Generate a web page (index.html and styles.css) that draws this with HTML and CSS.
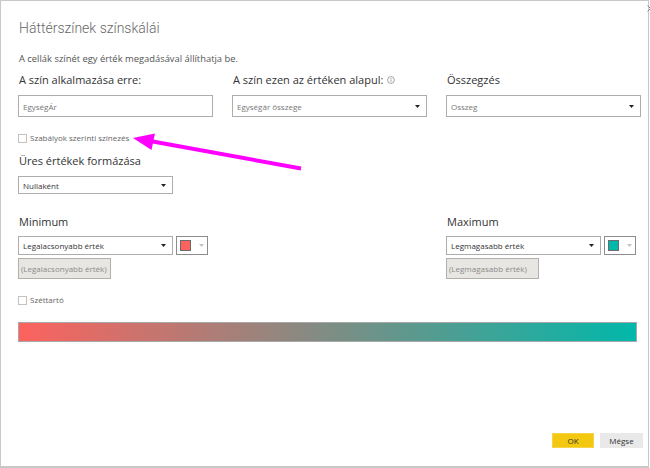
FILE: index.html
```html
<!DOCTYPE html>
<html lang="hu">
<head>
<meta charset="utf-8">
<title>Háttérszínek színskálái</title>
<link rel="stylesheet" href="styles.css">
</head>
<body>
<div class="dialog">
  <span class="close" aria-label="Bezárás"><svg width="7" height="7" viewBox="0 0 7 7"><path d="M0.5 0.5L6.5 6.5M6.5 0.5L0.5 6.5" stroke="#8a8a8a" stroke-width="1"/></svg></span>
  <h1 class="title">Háttérszínek színskálái</h1>
  <p class="subtitle">A cellák színét egy érték megadásával állíthatja be.</p>
  <div class="grid3">
    <div class="field">
      <div class="label">A szín alkalmazása erre:</div>
      <div class="input">EgységÁr</div>
    </div>
    <div class="field">
      <div class="label">A szín ezen az értéken alapul: <svg class="info" width="8" height="8" viewBox="0 0 8 8"><circle cx="4" cy="4" r="3.4" fill="none" stroke="#9a9a9a" stroke-width="0.9"/><rect x="3.55" y="3.4" width="0.9" height="2.4" fill="#9a9a9a"/><rect x="3.55" y="2" width="0.9" height="0.9" fill="#9a9a9a"/></svg></div>
      <div class="select tall muted">Egységár összege<svg class="caret" width="5" height="3" viewBox="0 0 5 3"><path d="M0 0H5L2.5 3Z" fill="#222"/></svg></div>
    </div>
    <div class="field">
      <div class="label">Összegzés</div>
      <div class="select tall muted">Osszeg<svg class="caret" width="5" height="3" viewBox="0 0 5 3"><path d="M0 0H5L2.5 3Z" fill="#222"/></svg></div>
    </div>
  </div>

  <div class="check rules"><span class="box"></span>Szabályok szerinti színezés</div>

  <div class="label blank-label">Üres értékek formázása</div>
  <div class="select short">Nullaként<svg class="caret" width="5" height="3" viewBox="0 0 5 3"><path d="M0 0H5L2.5 3Z" fill="#222"/></svg></div>

  <div class="grid3 minmax">
    <div class="field">
      <div class="label">Minimum</div>
      <div class="pick">
        <div class="select mid">Legalacsonyabb érték<svg class="caret" width="5" height="3" viewBox="0 0 5 3"><path d="M0 0H5L2.5 3Z" fill="#222"/></svg></div>
        <div class="swatch"><span class="chip red"></span><svg class="mini" width="5" height="3" viewBox="0 0 5 3"><path d="M0 0H5L2.5 3Z" fill="#c4c4c4"/></svg></div>
      </div>
      <div class="ghost">(Legalacsonyabb érték)</div>
    </div>
    <div class="field"></div>
    <div class="field">
      <div class="label">Maximum</div>
      <div class="pick">
        <div class="select mid">Legmagasabb érték<svg class="caret" width="5" height="3" viewBox="0 0 5 3"><path d="M0 0H5L2.5 3Z" fill="#222"/></svg></div>
        <div class="swatch"><span class="chip teal"></span><svg class="mini" width="5" height="3" viewBox="0 0 5 3"><path d="M0 0H5L2.5 3Z" fill="#c4c4c4"/></svg></div>
      </div>
      <div class="ghost">(Legmagasabb érték)</div>
    </div>
  </div>

  <div class="check diverge"><span class="box"></span>Széttartó</div>

  <div class="bar"></div>

  <div class="footer">
    <button class="btn ok">OK</button>
    <button class="btn cancel">Mégse</button>
  </div>

  <svg class="annot" width="649" height="468" viewBox="0 0 649 468">
    <line x1="301" y1="168.5" x2="150" y2="141" stroke="#ff00ff" stroke-width="4"/>
    <polygon points="133,138 155,133.5 151.5,150" fill="#ff00ff"/>
  </svg>
</div>
</body>
</html>
```

FILE: styles.css
```css
html, body {
  margin: 0;
  padding: 0;
  background: #fff;
  overflow: hidden;
}
body {
  font-family: "Open Sans", "Noto Sans", sans-serif;
  color: #333;
}
.dialog {
  position: relative;
  box-sizing: border-box;
  width: 649px;
  height: 468px;
  border: 1px solid #c8c8c8;
  border-bottom-width: 2px;
  padding: 15px 5px 18px 17px;
  display: flex;
  flex-direction: column;
  align-items: flex-start;
}
.close {
  position: absolute;
  top: 4px;
  right: -6px;
  width: 7px;
  height: 7px;
  display: block;
}
.close svg { display: block; }
.title {
  margin: 2px 0 0 1px;
  font-family: "Roboto", "Open Sans", sans-serif;
  font-size: 14px;
  font-weight: 300;
  line-height: 21px;
  color: #676767;
}
.subtitle {
  margin: 13px 0 0 1px;
  font-size: 9.4px;
  line-height: 14px;
  color: #555;
}
.grid3 {
  margin-top: 6px;
  display: grid;
  grid-template-columns: 195px 195px 195px;
  column-gap: 19px;
}
.field {
  display: flex;
  flex-direction: column;
  align-items: flex-start;
}
.label {
  font-size: 11px;
  line-height: 16px;
  color: #333;
  white-space: nowrap;
  display: flex;
  align-items: center;
  padding-left: 1px;
}
.info { margin-left: 4px; }
.input, .select {
  box-sizing: border-box;
  border: 1px solid #adadad;
  background: #fff;
  font-size: 8px;
  display: flex;
  align-items: center;
  padding-left: 4px;
  white-space: nowrap;
}
.input {
  margin-top: 7px;
  width: 195px;
  height: 22px;
  color: #777;
}
.select {
  justify-content: space-between;
  padding-right: 6px;
  color: #333;
}
.select.muted { color: #777; }
.select.tall {
  margin-top: 7px;
  width: 195px;
  height: 22px;
}
.select.short {
  margin-top: 7px;
  width: 155px;
  height: 18px;
}
.caret { display: block; flex: none; }
.check {
  display: flex;
  align-items: center;
  font-size: 8px;
  line-height: 10px;
  height: 10px;
  color: #666;
  white-space: nowrap;
}
.check .box {
  box-sizing: border-box;
  width: 9px;
  height: 9px;
  border: 1px solid #c2c2c2;
  margin-right: 3px;
  background: #fff;
}
.check.rules { margin-top: 16px; }
.blank-label { margin-top: 10px; }
.minmax { margin-top: 20px; }
.pick {
  margin-top: 6px;
  display: flex;
  gap: 3px;
}
.select.mid {
  width: 155px;
  height: 19px;
}
.swatch {
  box-sizing: border-box;
  width: 32px;
  height: 19px;
  border: 1px solid #8c8c8c;
  display: flex;
  align-items: center;
  padding-left: 3px;
}
.chip {
  box-sizing: border-box;
  width: 11px;
  height: 11px;
  border: 1px solid #6b6b6b;
}
.chip.red { background: #fd625e; }
.chip.teal { background: #01b8aa; }
.mini { display: block; margin-left: 8px; }
.ghost {
  box-sizing: border-box;
  margin-top: 3px;
  width: 93px;
  height: 21px;
  border: 1px solid #b3b0ab;
  background: #e8e6e2;
  color: #8a8a8a;
  font-size: 8px;
  display: flex;
  align-items: center;
  padding-left: 2px;
  white-space: nowrap;
}
.check.diverge { margin-top: 16px; }
.bar {
  box-sizing: border-box;
  margin-top: 17px;
  width: 619px;
  height: 20px;
  border: 1px solid #a8a8a8;
  background: linear-gradient(to right, #fd625e, #01b8aa);
}
.footer {
  margin-top: auto;
  align-self: stretch;
  display: flex;
  justify-content: flex-end;
  gap: 6px;
}
.btn {
  box-sizing: border-box;
  height: 15px;
  border: 1px solid transparent;
  font-family: inherit;
  font-size: 8px;
  line-height: 13px;
  padding: 0;
  color: #333;
}
.btn.ok {
  width: 42px;
  background: #f2c811;
  border-color: #f5d34a;
}
.btn.cancel {
  width: 43px;
  background: #e9e9e9;
  border-color: #e9e9e9;
}
.annot {
  position: absolute;
  left: -1px;
  top: -1px;
  pointer-events: none;
}
```
